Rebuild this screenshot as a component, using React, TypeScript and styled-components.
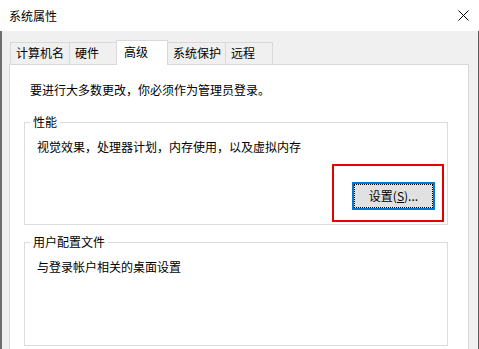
import styled, { createGlobalStyle } from "styled-components";

const GlobalStyle = createGlobalStyle`
  html, body {
    margin: 0;
    padding: 0;
    background: #ffffff;
  }
  body {
    font-family: "Noto Sans CJK SC", "Microsoft YaHei UI", sans-serif;
    font-size: 12px;
    color: #000000;
  }
`;

const Window = styled.div`
  width: 479px;
  height: 349px;
  display: flex;
  flex-direction: column;
  overflow: hidden;
  background: #ffffff;
`;

const TitleBar = styled.div`
  height: 31px;
  flex-shrink: 0;
  display: flex;
  align-items: center;
  justify-content: space-between;
  padding-left: 9px;
  background: #ffffff;
  line-height: 16px;
`;

const CloseButton = styled.div`
  width: 32px;
  height: 31px;
  display: flex;
  align-items: center;
  justify-content: center;
`;

const Client = styled.div`
  flex: 1;
  display: flex;
  flex-direction: column;
  background: #f0f0f0;
  border-left: 2px solid #6d6d6d;
  border-right: 1px solid #5c5c5c;
  padding: 9px 9px 0 7px;
  min-height: 0;
`;

const TabRow = styled.div`
  height: 24px;
  display: flex;
  align-items: flex-end;
  padding-left: 1px;
  flex-shrink: 0;
`;

const Tab = styled.div<{ $width: number; $active?: boolean }>`
  box-sizing: border-box;
  width: ${({ $width }) => $width}px;
  height: ${({ $active }) => ($active ? 25 : 22)}px;
  margin-left: -1px;
  margin-bottom: ${({ $active }) => ($active ? -1 : 0)}px;
  padding: ${({ $active }) => ($active ? "3px 0 0 7px" : "2px 0 0 5px")};
  border: 1px solid #d9d9d9;
  border-bottom: none;
  background: ${({ $active }) => ($active ? "#ffffff" : "#f0f0f0")};
  position: relative;
  z-index: ${({ $active }) => ($active ? 1 : 0)};
  line-height: 16px;
  white-space: nowrap;

  &:first-child {
    margin-left: 0;
  }
`;

const Panel = styled.div`
  flex: 1;
  background: #ffffff;
  border: 1px solid #d9d9d9;
  border-bottom: none;
  padding: 0 20px 0 14px;
`;

const Intro = styled.div`
  margin-top: 17px;
  padding-left: 6px;
  line-height: 16px;
`;

const Group = styled.fieldset<{ $gap: number }>`
  margin: ${({ $gap }) => $gap}px 0 0 0;
  padding: 0;
  border: 1px solid #dcdcdc;
  min-inline-size: 0;
`;

const Legend = styled.legend`
  margin-left: 5px;
  padding: 0 3px;
  line-height: 16px;
`;

const GroupBody = styled.div<{ $bottom: number }>`
  padding: 9px 12px ${({ $bottom }) => $bottom}px 12px;
  display: flex;
  flex-direction: column;
`;

const Description = styled.div`
  line-height: 16px;
`;

const ButtonRow = styled.div`
  margin-top: 27px;
  display: flex;
  justify-content: flex-end;
`;

const ButtonWrap = styled.div`
  position: relative;
`;

const Highlight = styled.div`
  position: absolute;
  top: -18px;
  left: -20px;
  right: -9px;
  bottom: -12px;
  border: 2px solid #e60000;
  pointer-events: none;
`;

const PushButton = styled.button`
  box-sizing: border-box;
  width: 83px;
  height: 28px;
  padding: 0;
  border: 2px solid #0078d7;
  background: #e1e1e1;
  outline: 1px dotted #000000;
  outline-offset: -3px;
  font-family: inherit;
  font-size: 12px;
  color: #000000;
  line-height: 16px;
`;

function App() {
  return (
    <>
      <GlobalStyle />
      <Window>
        <TitleBar>
          <span>系统属性</span>
          <CloseButton>
            <svg width="11" height="11" viewBox="0 0 11 11">
              <path d="M0.5 0.5 L10.5 10.5 M10.5 0.5 L0.5 10.5" stroke="#000" strokeWidth="1" fill="none" />
            </svg>
          </CloseButton>
        </TitleBar>
        <Client>
          <TabRow>
            <Tab $width={60}>计算机名</Tab>
            <Tab $width={48}>硬件</Tab>
            <Tab $width={52} $active>
              高级
            </Tab>
            <Tab $width={59}>系统保护</Tab>
            <Tab $width={48}>远程</Tab>
          </TabRow>
          <Panel>
            <Intro>要进行大多数更改，你必须作为管理员登录。</Intro>
            <Group $gap={16}>
              <Legend>性能</Legend>
              <GroupBody $bottom={14}>
                <Description>视觉效果，处理器计划，内存使用，以及虚拟内存</Description>
                <ButtonRow>
                  <ButtonWrap>
                    <PushButton>
                      设置(<u>S</u>)...
                    </PushButton>
                    <Highlight />
                  </ButtonWrap>
                </ButtonRow>
              </GroupBody>
            </Group>
            <Group $gap={9}>
              <Legend>用户配置文件</Legend>
              <GroupBody $bottom={70}>
                <Description>与登录帐户相关的桌面设置</Description>
              </GroupBody>
            </Group>
          </Panel>
        </Client>
      </Window>
    </>
  );
}

export default App;
